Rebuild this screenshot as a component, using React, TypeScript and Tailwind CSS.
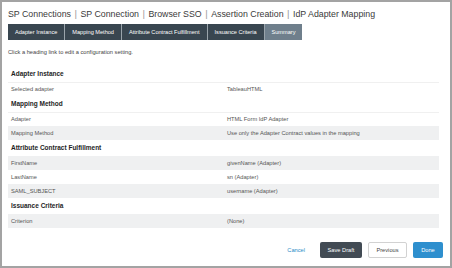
const crumbs = [
  "SP Connections",
  "SP Connection",
  "Browser SSO",
  "Assertion Creation",
  "IdP Adapter Mapping",
];

const tabs = [
  { label: "Adapter Instance", active: false },
  { label: "Mapping Method", active: false },
  { label: "Attribute Contract Fulfillment", active: false },
  { label: "Issuance Criteria", active: false },
  { label: "Summary", active: true },
];

type Row = { label: string; value: string; tone: "line" | "gray" | "white" };

const sections: { title: string; rows: Row[] }[] = [
  {
    title: "Adapter Instance",
    rows: [{ label: "Selected adapter", value: "TableauHTML", tone: "line" }],
  },
  {
    title: "Mapping Method",
    rows: [
      { label: "Adapter", value: "HTML Form IdP Adapter", tone: "line" },
      {
        label: "Mapping Method",
        value: "Use only the Adapter Contract values in the mapping",
        tone: "gray",
      },
    ],
  },
  {
    title: "Attribute Contract Fulfillment",
    rows: [
      { label: "FirstName", value: "givenName (Adapter)", tone: "gray" },
      { label: "LastName", value: "sn (Adapter)", tone: "white" },
      { label: "SAML_SUBJECT", value: "username (Adapter)", tone: "gray" },
    ],
  },
  {
    title: "Issuance Criteria",
    rows: [{ label: "Criterion", value: "(None)", tone: "gray" }],
  },
];

function SummaryRow({ row }: { row: Row }) {
  const tone =
    row.tone === "gray"
      ? "bg-[#eff0f1]"
      : row.tone === "line"
        ? "border-t border-[#f0f0f0]"
        : "";
  return (
    <div
      className={`grid h-[14px] grid-cols-[219px_1fr] items-center text-[5.7px] text-[#555] ${tone}`}
    >
      <span className="pl-[3px]">{row.label}</span>
      <span>{row.value}</span>
    </div>
  );
}

export default function App() {
  return (
    <div className="flex h-[268px] w-[452px] flex-col border-2 border-[#a3a3a3] bg-white font-['Liberation_Sans',Arial,sans-serif]">
      <div className="pl-[6px] pr-[11px]">
        <h1 className="mt-[6px] flex h-[12px] items-center whitespace-nowrap text-[8.8px] leading-[12px] text-[#3a3a3a]">
          {crumbs.map((c, i) => (
            <span key={c} className="flex items-center">
              {i > 0 && (
                <span className="px-[3.5px] text-[9.5px] text-[#9a9a9a]">|</span>
              )}
              {c}
            </span>
          ))}
        </h1>

        <div className="mt-[4px] flex h-[16px]">
          {tabs.map((t, i) => (
            <div
              key={t.label}
              className={`flex items-center px-[7px] text-[5.6px] text-white ${
                t.active ? "bg-[#6f7f8c]" : "bg-[#394650]"
              } ${i > 0 ? "border-l border-[#9aa4ab]" : ""}`}
            >
              {t.label}
            </div>
          ))}
        </div>

        <p className="mt-[7px] h-[10px] text-[5.7px] leading-[10px] text-[#444]">
          Click a heading link to edit a configuration setting.
        </p>

        <div className="mt-[9px]">
          {sections.map((s) => (
            <section key={s.title}>
              <h2 className="flex h-[16px] items-center pl-[3px] text-[6.5px] font-bold text-[#1e1e1e]">
                {s.title}
              </h2>
              {s.rows.map((r) => (
                <SummaryRow key={r.label} row={r} />
              ))}
            </section>
          ))}
        </div>
      </div>

      <div className="mt-[14px] flex items-center justify-end pr-[7px] text-[5.7px]">
        <button className="mr-[15px] text-[#2a8cc7]">Cancel</button>
        <button className="h-[16px] w-[42px] rounded-[2px] bg-[#424b54] text-white">
          Save Draft
        </button>
        <button className="ml-[6px] h-[16px] w-[39px] rounded-[2px] border border-[#d2d2d2] bg-white text-[#444]">
          Previous
        </button>
        <button className="ml-[6px] h-[16px] w-[30px] rounded-[2px] bg-[#2e8fce] text-white">
          Done
        </button>
      </div>
    </div>
  );
}
